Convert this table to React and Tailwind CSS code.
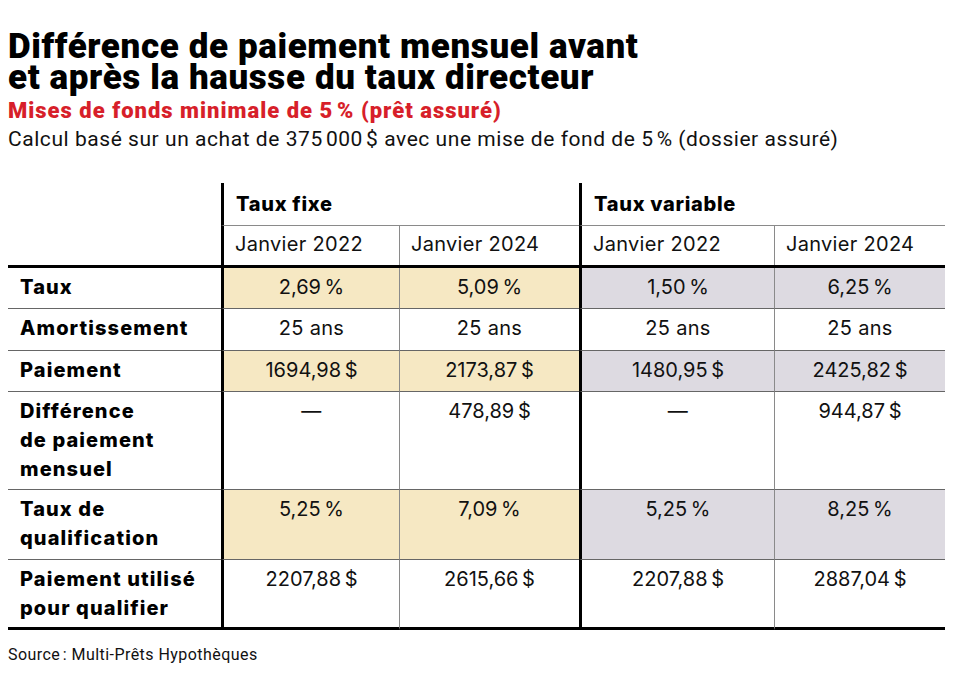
const cond = { fontFamily: "Roboto, 'Liberation Sans', sans-serif" };
const tbl = { fontFamily: "Inter, 'Liberation Sans', sans-serif" };

const S = "\u202f";

const rows = [
  { label: ["Taux"], h: "h-[41px]", vals: [`2,69${S}%`, `5,09${S}%`, `1,50${S}%`, `6,25${S}%`], shade: true },
  { label: ["Amortissement"], h: "h-[42px]", vals: ["25 ans", "25 ans", "25 ans", "25 ans"] },
  { label: ["Paiement"], h: "h-[41px]", vals: [`1694,98${S}$`, `2173,87${S}$`, `1480,95${S}$`, `2425,82${S}$`], shade: true },
  { label: ["Différence", "de paiement", "mensuel"], h: "h-[98px]", vals: ["—", `478,89${S}$`, "—", `944,87${S}$`] },
  { label: ["Taux de", "qualification"], h: "h-[70px]", vals: [`5,25${S}%`, `7,09${S}%`, `5,25${S}%`, `8,25${S}%`], shade: true },
  { label: ["Paiement utilisé", "pour qualifier"], h: "h-[70px]", vals: [`2207,88${S}$`, `2615,66${S}$`, `2207,88${S}$`, `2887,04${S}$`], last: true },
];

const colBorder = [
  "border-l-[3px] border-l-black",
  "border-l border-l-[#8a8a8a]",
  "border-l-[3px] border-l-black",
  "border-l border-l-[#8a8a8a]",
];
const shadeBg = ["bg-[#f6e8c3]", "bg-[#f6e8c3]", "bg-[#dddae1]", "bg-[#dddae1]"];

function DataRow({ row }) {
  const bottom = row.last ? "border-b-[3px] border-b-black" : "border-b border-b-[#666]";
  return (
    <>
      <div className={`${row.h} ${bottom} pl-[12px] pt-[5px] font-extrabold tracking-[1.1px] text-[20px] leading-[29px] text-black`}>
        {row.label.map((l) => (
          <div key={l}>{l}</div>
        ))}
      </div>
      {row.vals.map((v, i) => (
        <div
          key={i}
          className={`${row.h} ${bottom} ${colBorder[i]} ${row.shade ? shadeBg[i] : "bg-white"} pt-[5px] text-center text-[20px] tracking-[0.3px] leading-[29px] text-[#111]`}
        >
          {v}
        </div>
      ))}
    </>
  );
}

export default function App() {
  return (
    <div className="w-[961px] h-[683px] bg-white overflow-hidden pl-[8px] pt-[31px]">
      <h1 style={cond} className="text-[35px] leading-[31px] font-black tracking-[0.6px] text-black">
        Différence de paiement mensuel avant
        <br />
        et après la hausse du taux directeur
      </h1>
      <div style={cond} className="mt-[6px] text-[22px] leading-[24px] font-black tracking-[1px] text-[#d71f2a]">
        Mises de fonds minimale de 5{S}% (prêt assuré)
      </div>
      <div style={cond} className="mt-[4px] text-[21px] leading-[24px] tracking-[0.55px] text-[#111]">
        Calcul basé sur un achat de 375{S}000{S}$ avec une mise de fond de 5{S}% (dossier assuré)
      </div>

      <div style={tbl} className="mt-[32px] w-[937px] grid grid-cols-[213px_178px_180px_195px_171px]">
        <div className="h-[43px]" />
        <div className="col-span-2 h-[43px] border-l-[3px] border-l-black border-b border-b-[#8a8a8a] pl-[12px] pt-[7px] text-[20px] leading-[28px] font-extrabold tracking-[0.7px]">
          Taux fixe
        </div>
        <div className="col-span-2 h-[43px] border-l-[3px] border-l-black border-b border-b-[#8a8a8a] pl-[12px] pt-[7px] text-[20px] leading-[28px] font-extrabold tracking-[0.7px]">
          Taux variable
        </div>

        <div className="h-[39px]" />
        {["Janvier 2022", "Janvier 2024", "Janvier 2022", "Janvier 2024"].map((t, i) => (
          <div key={i} className={`h-[39px] ${colBorder[i]} pl-[11px] pt-[4px] text-[20px] tracking-[0.3px] leading-[28px] text-[#111]`}>
            {t}
          </div>
        ))}

        <div className="col-span-5 h-[3px] bg-black" />

        {rows.map((r) => (
          <DataRow key={r.label.join(" ")} row={r} />
        ))}
      </div>

      <div style={cond} className="mt-[15px] text-[16px] leading-[20px] tracking-[0.45px] text-[#111]">
        Source{S}: Multi-Prêts Hypothèques
      </div>
    </div>
  );
}
